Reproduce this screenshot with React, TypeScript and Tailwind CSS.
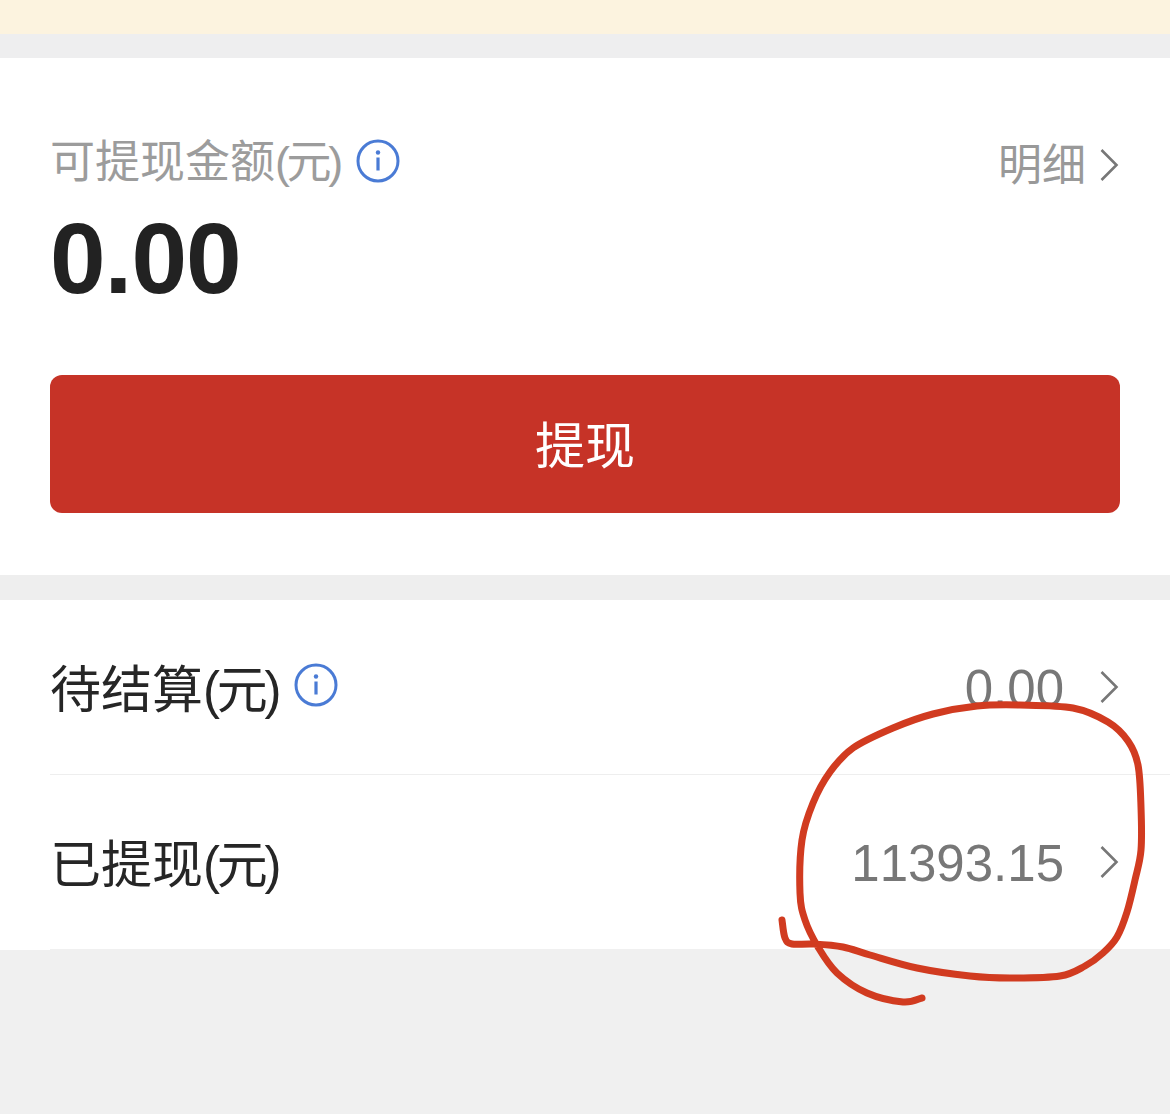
const FONT = "font-['Liberation_Sans','Noto_Sans_CJK_SC',sans-serif]";

// Hand-drawn circle traced over the screenshot
const SCRIBBLE: [number, number][] = [
  [782, 920], [785, 938], [792, 944], [813, 944], [843, 947], [870, 955], [917, 968],
  [970, 976], [1010, 978], [1060, 976], [1085, 966], [1103, 953], [1117, 937], [1127, 912],
  [1135, 880], [1141, 850], [1141, 807], [1138, 765], [1128, 741], [1108, 722], [1073, 708],
  [1020, 705], [977, 706], [933, 714], [893, 728], [853, 748], [830, 772], [813, 803],
  [802, 840], [800, 893], [805, 920], [818, 947], [837, 973], [867, 993], [903, 1002], [922, 998],
];

function smoothPath(points: [number, number][]) {
  let d = `M${points[0][0]} ${points[0][1]}`;
  for (let i = 0; i < points.length - 1; i++) {
    const p0 = points[Math.max(i - 1, 0)];
    const p1 = points[i];
    const p2 = points[i + 1];
    const p3 = points[Math.min(i + 2, points.length - 1)];
    const c1x = p1[0] + (p2[0] - p0[0]) / 6;
    const c1y = p1[1] + (p2[1] - p0[1]) / 6;
    const c2x = p2[0] - (p3[0] - p1[0]) / 6;
    const c2y = p2[1] - (p3[1] - p1[1]) / 6;
    d += ` C${c1x} ${c1y} ${c2x} ${c2y} ${p2[0]} ${p2[1]}`;
  }
  return d;
}

function InfoIcon() {
  return (
    <svg width="44" height="44" viewBox="0 0 44 44" fill="none" className="shrink-0">
      <circle cx="22" cy="22" r="20" stroke="#4a7bd5" strokeWidth="3" />
      <circle cx="22" cy="13.5" r="2.2" fill="#4a7bd5" />
      <rect x="20.4" y="18.5" width="3.2" height="13" fill="#4a7bd5" />
    </svg>
  );
}

function Chevron() {
  return (
    <svg width="20" height="34" viewBox="0 0 20 34" fill="none" className="shrink-0">
      <path d="M2.5 2L17.5 17L2.5 32" stroke="#777777" strokeWidth="2.6" />
    </svg>
  );
}

function Row({ label, value, info, border }: { label: string; value: string; info?: boolean; border: string }) {
  return (
    <div className={`ml-[50px] h-[175px] flex items-center pr-[51px] border-b ${border}`}>
      <span className="text-[51px] leading-none text-[#262626] mt-[6px]">
        {label}
        <span className="tracking-[-3.3px]">(元)</span>
      </span>
      {info && (
        <span className="ml-[16px] -mt-[5px] flex">
          <InfoIcon />
        </span>
      )}
      <span className="ml-auto text-[51px] leading-none text-[#777777] [font-kerning:none] mt-[2px]">{value}</span>
      <span className="ml-[35px] flex">
        <Chevron />
      </span>
    </div>
  );
}

export default function App() {
  return (
    <div className={`relative w-[1170px] h-[1114px] overflow-hidden bg-[#f0f0f0] ${FONT}`}>
      <div className="h-[34px] bg-[#fcf3df]" />
      <div className="h-[24px] bg-[#eeeeef]" />

      {/* Balance */}
      <div className="h-[517px] bg-white px-[50px] pt-[81px]">
        <div className="flex items-center h-[44px]">
          <span className="text-[45px] leading-none text-[#9c9c9c] mt-[2px]">
            可提现金额
            <span className="tracking-[-3.4px]">(元)</span>
          </span>
          <span className="ml-[16px] flex">
            <InfoIcon />
          </span>
          <span className="ml-auto text-[44px] leading-none text-[#999999] mt-[10px]">明细</span>
          <span className="ml-[13px] mr-px mt-[8px] flex">
            <Chevron />
          </span>
        </div>
        <div className="mt-[25px] h-[100px] text-[100px] leading-[100px] font-bold text-[#222222] tracking-[-1px]">
          0.00
        </div>
        <button className="mt-[67px] w-full h-[138px] pt-[5px] rounded-[12px] bg-[#c63327] text-white text-[50px] leading-none">
          提现
        </button>
      </div>

      <div className="h-[25px] bg-[#eeeeee]" />

      {/* Settlement rows */}
      <div className="h-[350px] bg-white">
        <Row label="待结算" value="0.00" info border="border-[#eeeeee]" />
        <Row label="已提现" value="11393.15" border="border-[#f0f0f0]" />
      </div>

      {/* Red marker annotation on top of the screenshot */}
      <svg width="1170" height="1114" viewBox="0 0 1170 1114" fill="none" className="absolute inset-0">
        <path d={smoothPath(SCRIBBLE)} stroke="#d13b20" strokeWidth="7" strokeLinecap="round" strokeLinejoin="round" />
      </svg>
    </div>
  );
}
